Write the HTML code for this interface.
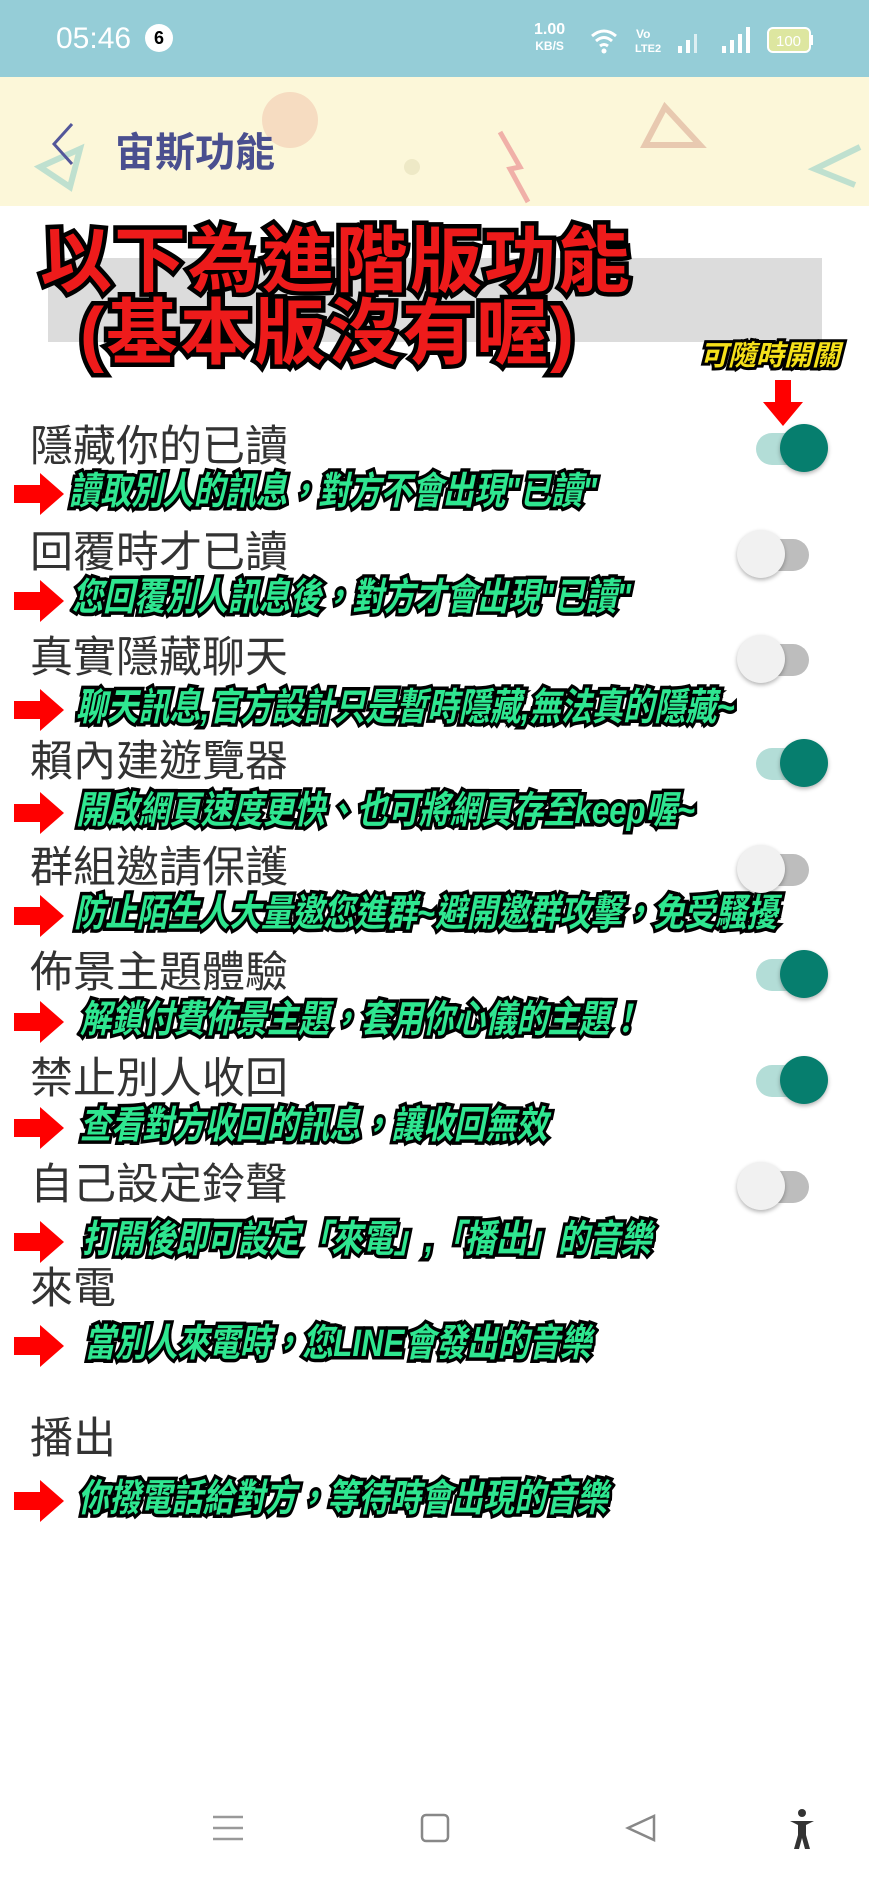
<!DOCTYPE html>
<html><head><meta charset="utf-8"><style>
*{margin:0;padding:0;box-sizing:border-box}
body{width:869px;height:1883px;position:relative;background:#fff;overflow:hidden;font-family:"Liberation Sans","Noto Sans CJK TC",sans-serif}
.abs{position:absolute}
.status{left:0;top:0;width:869px;height:77px;background:#95cdd7}
.hdr{left:0;top:77px;width:869px;height:129px;background:#fcf7d9}
.title{left:30px;white-space:nowrap;font-size:43px;color:#333;line-height:1}
.ann{white-space:nowrap;font-size:38px;font-weight:bold;font-style:italic;color:#2fe690;-webkit-text-stroke:7px #000;paint-order:stroke fill;transform:scaleX(.82);transform-origin:left center;line-height:1}
.arrow{left:14px;width:50px;height:42px}
.tg{width:80px;height:54px}
.tg .tr{position:absolute;top:12px;height:32px;border-radius:16px}
.tg .th{position:absolute;top:3px;width:48px;height:48px;border-radius:50%;box-shadow:0 2px 4px rgba(0,0,0,.3)}
.red{white-space:nowrap;font-size:72px;font-weight:bold;color:#ee1b1b;-webkit-text-stroke:9px #000;paint-order:stroke fill;line-height:1;letter-spacing:2px}
</style></head><body>
<div class="abs status"></div>
<div class="abs" style="left:56px;top:22px;font-size:30px;color:#fff">05:46</div>
<div class="abs" style="left:145px;top:24px;width:28px;height:28px;border-radius:50%;background:#fff;color:#000;font-size:18px;font-weight:bold;text-align:center;line-height:28px">6</div>
<div class="abs" style="left:534px;top:22px;font-size:16px;color:#fff;line-height:1;font-weight:bold;text-align:center">1.00<br><span style="font-size:12px">KB/S</span></div>
<svg class="abs" style="left:590px;top:24px" width="230" height="32" viewBox="0 0 230 32">
<path d="M2 12 Q14 2 26 12 M6 17 Q14 10 22 17 M10 22 Q14 19 18 22" stroke="#fff" stroke-width="3" fill="none"/><circle cx="14" cy="27" r="2.5" fill="#fff"/>
<text x="46" y="14" font-size="12" fill="#fff" font-weight="bold">Vo</text><text x="45" y="28" font-size="11" fill="#fff" font-weight="bold">LTE2</text>
<rect x="88" y="22" width="4" height="7" fill="#fff"/><rect x="96" y="16" width="4" height="13" fill="#fff"/><rect x="104" y="10" width="3" height="19" fill="#ddeff2"/>
<rect x="132" y="22" width="4" height="7" fill="#fff"/><rect x="140" y="16" width="4" height="13" fill="#fff"/><rect x="148" y="10" width="4" height="19" fill="#fff"/><rect x="156" y="3" width="4" height="26" fill="#fff"/>
<rect x="178" y="4" width="42" height="24" rx="5" fill="#dde6a0" stroke="#fff" stroke-width="2"/><rect x="220" y="11" width="3" height="10" fill="#fff"/><text x="186" y="22" font-size="15" fill="#fff">100</text>
</svg>
<div class="abs hdr"></div>
<svg class="abs" style="left:0;top:77px" width="869" height="129">
<circle cx="290" cy="43" r="28" fill="#f2c9b0" opacity=".6"/><circle cx="412" cy="90" r="8" fill="#eee9c6"/>
<path d="M500 55 L520 90 L510 92 L528 125" stroke="#f0b0a8" stroke-width="5" fill="none"/>
<path d="M665 30 L645 68 L700 68 Z" fill="none" stroke="#e8c9b0" stroke-width="6"/>
<path d="M40 90 L80 72 L70 110 Z" fill="none" stroke="#bfe0cf" stroke-width="6"/>
<path d="M860 70 L815 92 L855 108" fill="none" stroke="#bfe0cf" stroke-width="6"/>
</svg>
<svg class="abs" style="left:48px;top:122px" width="30" height="44"><path d="M24 2 L6 22 L24 42" stroke="#53579a" stroke-width="3" fill="none"/></svg>
<div class="abs" style="left:115px;top:120px;font-size:40px;color:#4a4f8f;font-weight:bold">宙斯功能</div>

<div class="abs" style="left:48px;top:258px;width:774px;height:84px;background:#dcdcdc"></div>
<div class="abs red" style="left:40px;top:226px">以下為進階版功能</div>
<div class="abs red" style="left:80px;top:298px">(基本版沒有喔)</div>
<div class="abs" style="left:700px;top:334px;white-space:nowrap;font-size:28px;font-weight:bold;font-style:italic;color:#f5e01a;-webkit-text-stroke:6px #000;paint-order:stroke fill">可隨時開關</div>
<svg class="abs" style="left:762px;top:380px" width="42" height="48"><path d="M13 0 H29 V22 H41 L21 46 L1 22 H13 Z" fill="#f00"/></svg>

<div class="abs title" style="top:426px">隱藏你的已讀</div>
<div class="abs title" style="top:532px">回覆時才已讀</div>
<div class="abs title" style="top:637px">真實隱藏聊天</div>
<div class="abs title" style="top:741px">賴內建遊覽器</div>
<div class="abs title" style="top:847px">群組邀請保護</div>
<div class="abs title" style="top:952px">佈景主題體驗</div>
<div class="abs title" style="top:1058px">禁止別人收回</div>
<div class="abs title" style="top:1164px">自己設定鈴聲</div>
<div class="abs title" style="top:1268px">來電</div>
<div class="abs title" style="top:1418px">播出</div>

<svg width="0" height="0" style="position:absolute"><defs><symbol id="ar" viewBox="0 0 50 42"><path d="M0 12 H26 V0 L50 21 L26 42 V30 H0 Z" fill="#f00"/></symbol></defs></svg>
<svg class="abs arrow" style="top:473px"><use href="#ar"/></svg>
<svg class="abs arrow" style="top:580px"><use href="#ar"/></svg>
<svg class="abs arrow" style="top:689px"><use href="#ar"/></svg>
<svg class="abs arrow" style="top:792px"><use href="#ar"/></svg>
<svg class="abs arrow" style="top:895px"><use href="#ar"/></svg>
<svg class="abs arrow" style="top:1001px"><use href="#ar"/></svg>
<svg class="abs arrow" style="top:1107px"><use href="#ar"/></svg>
<svg class="abs arrow" style="top:1221px"><use href="#ar"/></svg>
<svg class="abs arrow" style="top:1325px"><use href="#ar"/></svg>
<svg class="abs arrow" style="top:1480px"><use href="#ar"/></svg>

<div class="abs ann" style="left:69px;top:473px">讀取別人的訊息，對方不會出現"已讀"</div>
<div class="abs ann" style="left:72px;top:579px">您回覆別人訊息後，對方才會出現"已讀"</div>
<div class="abs ann" style="left:76px;top:689px">聊天訊息,官方設計只是暫時隱藏,無法真的隱藏~</div>
<div class="abs ann" style="left:76px;top:792px">開啟網頁速度更快、也可將網頁存至keep喔~</div>
<div class="abs ann" style="left:74px;top:895px">防止陌生人大量邀您進群~避開邀群攻擊，免受騷擾</div>
<div class="abs ann" style="left:80px;top:1001px">解鎖付費佈景主題，套用你心儀的主題！</div>
<div class="abs ann" style="left:80px;top:1107px">查看對方收回的訊息，讓收回無效</div>
<div class="abs ann" style="left:82px;top:1221px">打開後即可設定「來電」,「播出」的音樂</div>
<div class="abs ann" style="left:84px;top:1325px">當別人來電時，您LINE會發出的音樂</div>
<div class="abs ann" style="left:78px;top:1480px">你撥電話給對方，等待時會出現的音樂</div>

<div class="abs tg" style="left:752px;top:421px"><div class="tr" style="left:4px;width:60px;background:#b3ddd7"></div><div class="th" style="left:28px;background:#067e6e"></div></div>
<div class="abs tg" style="left:735px;top:527px"><div class="tr" style="left:14px;width:60px;background:#bdbdbd"></div><div class="th" style="left:2px;background:#f1f1f1"></div></div>
<div class="abs tg" style="left:735px;top:632px"><div class="tr" style="left:14px;width:60px;background:#bdbdbd"></div><div class="th" style="left:2px;background:#f1f1f1"></div></div>
<div class="abs tg" style="left:752px;top:736px"><div class="tr" style="left:4px;width:60px;background:#b3ddd7"></div><div class="th" style="left:28px;background:#067e6e"></div></div>
<div class="abs tg" style="left:735px;top:842px"><div class="tr" style="left:14px;width:60px;background:#bdbdbd"></div><div class="th" style="left:2px;background:#f1f1f1"></div></div>
<div class="abs tg" style="left:752px;top:947px"><div class="tr" style="left:4px;width:60px;background:#b3ddd7"></div><div class="th" style="left:28px;background:#067e6e"></div></div>
<div class="abs tg" style="left:752px;top:1053px"><div class="tr" style="left:4px;width:60px;background:#b3ddd7"></div><div class="th" style="left:28px;background:#067e6e"></div></div>
<div class="abs tg" style="left:735px;top:1159px"><div class="tr" style="left:14px;width:60px;background:#bdbdbd"></div><div class="th" style="left:2px;background:#f1f1f1"></div></div>

<svg class="abs" style="left:0;top:1805px" width="869" height="50">
<path d="M213 12 H243 M213 23 H243 M213 34 H243" stroke="#999" stroke-width="2.5"/>
<rect x="422" y="10" width="26" height="26" rx="4" fill="none" stroke="#888" stroke-width="2.5"/>
<path d="M654 11 L628 23 L654 35 Z" fill="none" stroke="#888" stroke-width="2.5"/>
<circle cx="802" cy="8" r="4" fill="#333"/><path d="M790 16 H814 L806 20 V30 L810 44 H805 L802 33 L799 44 H794 L798 30 V20 Z" fill="#333"/>
</svg>
</body></html>
